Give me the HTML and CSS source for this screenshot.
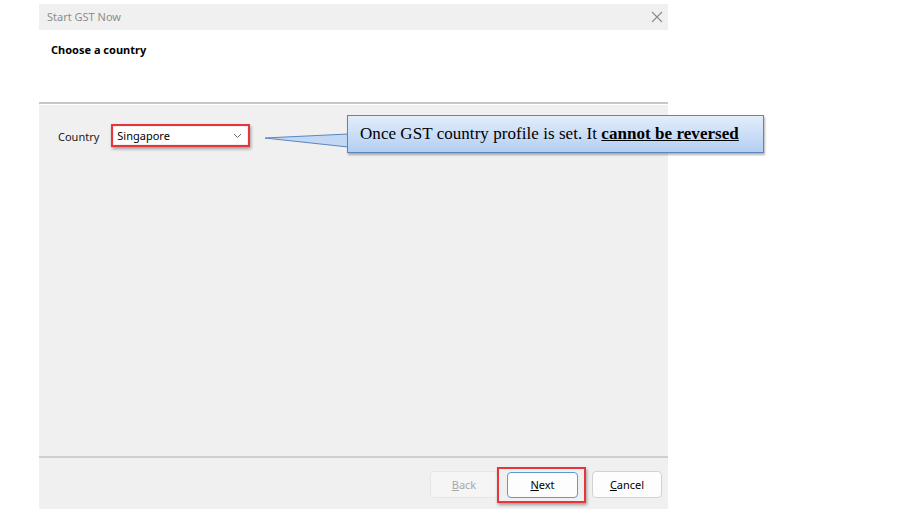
FILE: index.html
```html
<!DOCTYPE html>
<html>
<head>
<meta charset="utf-8">
<link rel="stylesheet" href="styles.css">
</head>
<body>
<div class="stage">
  <div class="dialog">
    <div class="titlebar">
      <span class="title">Start GST Now</span>
      <svg class="close" width="12" height="12" viewBox="0 0 12 12"><path d="M1 1L11 11M11 1L1 11" stroke="#8a8a8a" stroke-width="1.1" fill="none"/></svg>
    </div>
    <div class="header">
      <span class="heading">Choose a country</span>
    </div>
    <div class="content">
      <div class="row">
        <span class="label">Country</span>
        <div class="hl select-hl">
          <div class="select">
            <span>Singapore</span>
            <svg width="9" height="6" viewBox="0 0 9 6"><path d="M1 1L4.5 4.5L8 1" stroke="#666" stroke-width="1" fill="none"/></svg>
          </div>
        </div>
      </div>
    </div>
    <div class="footer">
      <button class="btn disabled"><u>B</u>ack</button>
      <div class="hl next-hl"><button class="btn primary"><u>N</u>ext</button></div>
      <button class="btn"><u>C</u>ancel</button>
    </div>
  </div>
  <div class="callout">
    <svg class="tail" width="90" height="30" viewBox="0 0 90 30"><path d="M84 9L1 13L84 22" fill="#c3d8f4" stroke="#5a86c0" stroke-width="1"/></svg>
    <div class="bubble">Once GST country profile is set. It <b><u>cannot be reversed</u></b></div>
  </div>
</div>
</body>
</html>
```
FILE: styles.css
```css
html, body { margin: 0; padding: 0; background: #fff; }
.stage { position: relative; width: 903px; height: 531px; }
.dialog {
  margin-left: 39px;
  padding-top: 4px;
  width: 629px;
  display: flex;
  flex-direction: column;
  font-family: "Noto Sans", "Open Sans", sans-serif;
  font-size: 11px;
  color: #000;
}
.titlebar {
  height: 26px;
  background: #f0f0f0;
  display: flex;
  align-items: center;
  justify-content: space-between;
  padding: 0 5px 0 8px;
}
.title { color: #8d8d8d; font-size: 11px; margin-top: -1px; }
.header {
  background: #fff;
  height: 74px;
  border-bottom: 2px solid #c8c8c8;
  padding: 12px 0 0 12px;
  box-sizing: border-box;
}
.heading { font-weight: bold; font-size: 11px; }
.content {
  background: #f0f0f0;
  height: 353px;
  margin-top: 1px;
  border-bottom: 2px solid #cfcfcf;
  padding: 19px 0 0 19px;
  box-sizing: border-box;
}
.row { display: flex; align-items: center; gap: 12px; }
.label { font-size: 11px; color: #1a1a1a; margin-top: 1px; }
.hl {
  border: 2px solid #e8343a;
  box-shadow: 1px 2px 3px rgba(0,0,0,0.35);
  padding: 1px;
}
.select-hl { width: 133px; }
.select {
  background: #fff;
  height: 17px;
  display: flex;
  align-items: center;
  justify-content: space-between;
  padding: 0 5px 0 3px;
  font-size: 11px;
}
.footer {
  background: #f0f0f0;
  height: 51px;
  display: flex;
  align-items: center;
  justify-content: flex-end;
  padding: 2px 6px 0 0;
  box-sizing: border-box;
}
.btn {
  width: 70px;
  height: 27px;
  background: #fdfdfd;
  border: 1px solid #d2d2d2;
  border-radius: 4px;
  font-family: "Noto Sans", "Open Sans", sans-serif;
  font-size: 11px;
  color: #000;
  padding: 0;
}
.btn.disabled { color: #a8a8a8; background: #f5f5f5; border-color: #e6e6e6; width: 68px; margin-right: -1px; }
.next-hl { padding: 3px 6px 3px 8px; margin-right: 6px; }
.btn.primary { border-color: #5a9bd5; width: 71px; height: 26px; }
.callout {
  position: absolute;
  left: 264px;
  top: 115px;
}
.tail { position: absolute; left: 0; top: 10px; }
.bubble {
  margin-left: 83px;
  width: 417px;
  height: 38px;
  box-sizing: border-box;
  border: 1px solid #5a86c0;
  background: linear-gradient(#e3edfb, #b3cff2);
  box-shadow: 1px 2px 2px rgba(0,0,0,0.3);
  font-family: "Liberation Serif", "Times New Roman", serif;
  font-size: 17px;
  letter-spacing: 0.05px;
  color: #000;
  padding: 8px 0 0 12px;
  position: relative;
}
```
